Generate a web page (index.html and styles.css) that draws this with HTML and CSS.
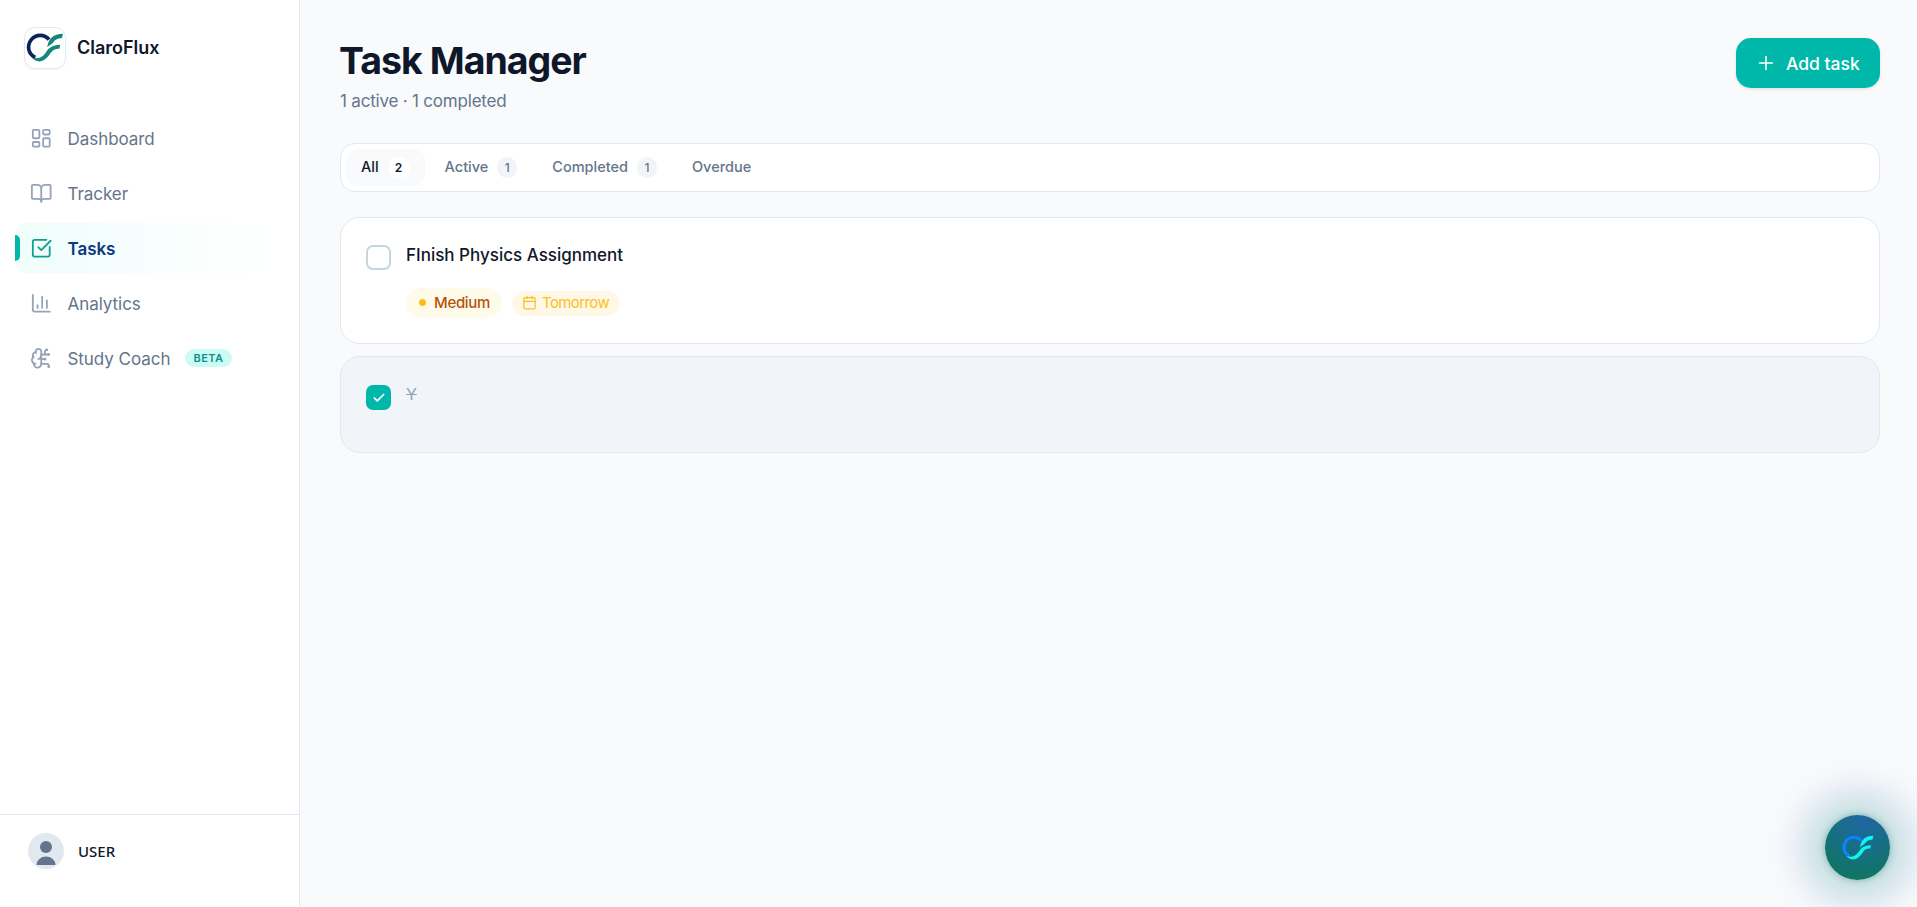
FILE: index.html
```html
<!DOCTYPE html>
<html lang="en">
  <head>
    <meta charset="UTF-8" />
    <title>ClaroFlux - Task Manager</title>
    <link rel="stylesheet" href="styles.css">
  </head>
  <body>
    <svg class="sprite">
      <symbol id="logo" viewBox="0 0 126 126">
        <path class="logo-c" d="M75 38 C62 21 36 21 22 38 C8 56 12 82 34 91" />
        <path class="logo-f" d="M70 61 C73 34 88 21 117 20 L114 33 C99 34 93 39 87 47 C82 52 77 53 70 61Z" />
        <path class="logo-f" d="M22 91 C37 97 52 94 63 80 C74 62 83 54 109 53 L106 65 C93 65 87 68 79 79 C66 100 44 115 22 91Z" />
      </symbol>
    </svg>
    <div class="layout">
      <aside class="sidebar">
        <div class="brand">
          <div class="brand-logo"><svg><use href="#logo" /></svg></div>
          <span class="brand-name">ClaroFlux</span>
        </div>
        <nav class="nav">
          <a class="nav-item">
            <svg class="icon" viewBox="0 0 24 24">
              <rect x="3" y="3" width="7" height="9" rx="1" />
              <rect x="14" y="3" width="7" height="5" rx="1" />
              <rect x="14" y="12" width="7" height="9" rx="1" />
              <rect x="3" y="16" width="7" height="5" rx="1" />
            </svg>
            <span>Dashboard</span>
          </a>
          <a class="nav-item">
            <svg class="icon" viewBox="0 0 24 24">
              <path d="M12 7v14" />
              <path d="M3 18a1 1 0 0 1-1-1V4a1 1 0 0 1 1-1h5a4 4 0 0 1 4 4 4 4 0 0 1 4-4h5a1 1 0 0 1 1 1v13a1 1 0 0 1-1 1h-6a3 3 0 0 0-3 3 3 3 0 0 0-3-3z" />
            </svg>
            <span>Tracker</span>
          </a>
          <a class="nav-item active">
            <svg class="icon" viewBox="0 0 24 24">
              <path d="M21 10.5V19a2 2 0 0 1-2 2H5a2 2 0 0 1-2-2V5a2 2 0 0 1 2-2h12.5" />
              <path d="m9 11 3 3L22 4" />
            </svg>
            <span>Tasks</span>
          </a>
          <a class="nav-item">
            <svg class="icon" viewBox="0 0 24 24">
              <path d="M3 3v16a2 2 0 0 0 2 2h16" />
              <path d="M18 17V9" />
              <path d="M13 17V5" />
              <path d="M8 17v-3" />
            </svg>
            <span>Analytics</span>
          </a>
          <a class="nav-item">
            <svg class="icon" viewBox="0 0 24 24">
              <path d="M12 5a3 3 0 1 0-5.997.125 4 4 0 0 0-2.526 5.77 4 4 0 0 0 .556 6.588A4 4 0 1 0 12 18Z" />
              <path d="M9 13a4.5 4.5 0 0 0 3-4" />
              <path d="M6.003 5.125A3 3 0 0 0 6.401 6.5" />
              <path d="M3.477 10.896a4 4 0 0 1 .585-.396" />
              <path d="M6 18a4 4 0 0 1-1.967-.516" />
              <path d="M12 13h4" />
              <path d="M12 18h6a2 2 0 0 1 2 2v1" />
              <path d="M12 8h8" />
              <path d="M16 8V5a2 2 0 0 1 2-2" />
              <circle cx="16" cy="13" r=".5" />
              <circle cx="18" cy="3" r=".5" />
              <circle cx="20" cy="21" r=".5" />
              <circle cx="20" cy="8" r=".5" />
            </svg>
            <span>Study Coach</span>
            <span class="beta">BETA</span>
          </a>
        </nav>
        <div class="profile">
          <svg class="avatar" viewBox="0 0 36 36">
            <circle cx="18" cy="18" r="18" fill="#e2e8f0" />
            <circle cx="18" cy="14" r="6" fill="#64748b" />
            <path d="M8.5 32a9.5 8.5 0 0 1 19 0z" fill="#64748b" />
          </svg>
          <span class="profile-name">USER</span>
        </div>
      </aside>

      <main class="main">
        <header class="header">
          <div>
            <h1>Task Manager</h1>
            <p class="summary">1 active · 1 completed</p>
          </div>
          <button class="add-button">
            <svg class="icon" viewBox="0 0 24 24"><path d="M5 12h14M12 5v14" /></svg>
            <span>Add task</span>
          </button>
        </header>

        <div class="tabs">
          <button class="tab selected">All <span class="count">2</span></button>
          <button class="tab">Active <span class="count">1</span></button>
          <button class="tab">Completed <span class="count">1</span></button>
          <button class="tab">Overdue</button>
        </div>

        <div class="task-list">
          <div class="task">
            <span class="checkbox"></span>
            <div class="task-body">
              <div class="task-title">FInish Physics Assignment</div>
              <div class="tags">
                <span class="tag priority"><i class="dot"></i>Medium</span>
                <span class="tag due">
                  <svg class="icon" viewBox="0 0 24 24">
                    <path d="M8 2v4M16 2v4M3 10h18" />
                    <rect x="3" y="4" width="18" height="18" rx="2" />
                  </svg>
                  Tomorrow
                </span>
              </div>
            </div>
          </div>
          <div class="task done">
            <span class="checkbox">
              <svg class="icon" viewBox="0 0 24 24"><path d="M20 6 9 17l-5-5" /></svg>
            </span>
            <div class="task-body">
              <div class="task-title">Y</div>
            </div>
          </div>
        </div>
      </main>
    </div>
    <button class="coach-button"><svg><use href="#logo" /></svg></button>
  </body>
</html>
```

FILE: styles.css
```css
* {
  box-sizing: border-box;
}
body {
  margin: 0;
  font-family: Inter, 'Liberation Sans', sans-serif;
  background: #f8fafc;
  color: #0f172a;
  overflow: hidden;
}
button {
  border: 0;
  font-family: inherit;
}
.sprite {
  display: none;
}
.icon {
  flex: none;
  fill: none;
  stroke: currentColor;
  stroke-width: 1.75;
  stroke-linecap: round;
  stroke-linejoin: round;
}
.layout {
  display: flex;
  height: 100vh;
}

/* sidebar */
.sidebar {
  display: flex;
  flex-direction: column;
  width: 300px;
  background: #fff;
  border-right: 1px solid #e2e8f0;
}
.brand {
  display: flex;
  align-items: center;
  gap: 11px;
  padding: 27px 24px 0;
}
.brand-logo {
  width: 42px;
  height: 42px;
  border: 1px solid #e2e8f0;
  border-radius: 11px;
  box-shadow: 0 1px 2px rgba(15, 23, 42, 0.05);
}
.brand-logo svg {
  display: block;
  width: 42px;
  height: 42px;
  margin: -1px;
}
.logo-c {
  fill: none;
  stroke: var(--logo-c, #0b2559);
  stroke-width: 11;
}
.logo-f {
  fill: var(--logo-f, #14867a);
}
.brand-name {
  padding-bottom: 1px;
  font-size: 18px;
  font-weight: 600;
  letter-spacing: 0;
}
.nav {
  display: flex;
  flex-direction: column;
  gap: 5px;
  flex: 1;
  padding: 44px 15px 0;
}
.nav-item {
  display: flex;
  align-items: center;
  height: 50px;
  padding-left: 15px;
  border-radius: 14px;
  font-size: 17px;
  line-height: 22px;
  letter-spacing: -0.05px;
  color: #64748b;
}
.nav-item span {
  margin-top: 1px;
}
.nav-item .icon {
  width: 22.5px;
  height: 22.5px;
  margin-right: 15px;
  color: #94a3b8;
  stroke-width: 1.9;
}
.nav-item.active {
  position: relative;
  background: linear-gradient(to right, #effdfb, #fff);
  color: #0a3a82;
  font-weight: 600;
}
.nav-item.active .icon {
  color: #0d9f90;
}
.nav-item.active::before {
  content: '';
  position: absolute;
  left: 0;
  top: 12px;
  width: 5px;
  height: 26px;
  border-radius: 0 5px 5px 0;
  background: #00b8a9;
}
.nav-item .beta {
  margin: 0 0 0 15px;
  padding: 0 8px;
  border-radius: 9px;
  background: #ccfbf6;
  color: #0d9488;
  font-size: 11px;
  line-height: 18px;
  font-weight: 600;
  letter-spacing: 0.5px;
}
.profile {
  display: flex;
  align-items: flex-start;
  gap: 14px;
  height: 93px;
  padding: 18px 28px;
  border-top: 1px solid #e2e8f0;
}
.avatar {
  width: 36px;
  height: 36px;
}
.profile-name {
  font-family: 'Noto Sans', sans-serif;
  font-size: 15px;
  line-height: 37px;
  font-weight: 500;
}

/* content */
.main {
  flex: 1;
  padding: 38px 37px 0 40px;
}
.header {
  display: flex;
  justify-content: space-between;
  align-items: flex-start;
  height: 105px;
}
h1 {
  margin: 0 0 0 -1px;
  font-size: 37.5px;
  line-height: 46px;
  font-weight: 700;
  letter-spacing: -1px;
}
.summary {
  margin: 5px 0 0;
  font-size: 17px;
  line-height: 24px;
  letter-spacing: -0.2px;
  color: #64748b;
}
.add-button {
  display: flex;
  align-items: center;
  gap: 9px;
  width: 144px;
  height: 50px;
  padding: 0 19px;
  border-radius: 15px;
  background: #00b8a9;
  box-shadow: 0 1px 3px rgba(15, 23, 42, 0.12);
  color: #fff;
  font-size: 17.5px;
  font-weight: 500;
  white-space: nowrap;
}
.add-button .icon {
  width: 22px;
  height: 22px;
}
.tabs {
  display: flex;
  gap: 5px;
  height: 49px;
  padding: 5px;
  border: 1px solid #e2e8f0;
  border-radius: 15px;
  background: #fff;
}
.tab {
  display: flex;
  align-items: center;
  gap: 9px;
  padding: 0 15px 2px;
  border-radius: 12px;
  background: none;
  color: #64748b;
  font-size: 14.5px;
  font-weight: 500;
}
.tab.selected {
  background: #f8fafc;
  color: #0f172a;
}
.count {
  width: 20px;
  margin-top: 1px;
  border-radius: 11px;
  background: #f1f5f9;
  font-size: 12px;
  line-height: 21px;
  text-align: center;
}
.selected .count {
  width: 22px;
  background: #fff;
  font-weight: 600;
}
.task-list {
  display: flex;
  flex-direction: column;
  gap: 12px;
  margin-top: 25px;
}
.task {
  display: flex;
  gap: 15px;
  height: 127px;
  padding: 24px 25px;
  border: 1px solid #e2e8f0;
  border-radius: 20px;
  background: #fff;
}
.checkbox {
  display: flex;
  align-items: center;
  justify-content: center;
  width: 25px;
  height: 25px;
  margin-top: 3px;
  border: 2px solid #c5d7de;
  border-radius: 7px;
}
.task-title {
  font-size: 17px;
  line-height: 26px;
  font-weight: 500;
}
.tags {
  display: flex;
  align-items: center;
  gap: 10px;
  margin-top: 20px;
}
.tag {
  display: flex;
  align-items: center;
  padding-bottom: 1px;
  border-radius: 15px;
  font-size: 15px;
  white-space: nowrap;
}
.priority {
  width: 96px;
  height: 30px;
  padding-left: 13px;
  background: #fffbeb;
  color: #b45309;
  font-weight: 500;
  letter-spacing: -0.3px;
}
.dot {
  width: 7px;
  height: 7px;
  margin-right: 8px;
  border-radius: 50%;
  background: #fbbf14;
}
.due {
  gap: 5px;
  width: 108px;
  height: 25px;
  padding-left: 10px;
  background: #fff8e6;
  color: #fbbf24;
  letter-spacing: -0.6px;
}
.due .icon {
  width: 15px;
  height: 15px;
  stroke-width: 2;
}
.task.done {
  height: 97px;
  background: #f1f4f9;
}
.done .checkbox {
  margin-top: 4px;
  border: 0;
  background: #00b8a9;
  color: #fff;
}
.done .checkbox .icon {
  width: 14px;
  height: 14px;
  stroke-width: 3;
}
.done .task-title {
  color: #94a3b8;
  font-size: 16px;
  font-weight: 400;
  text-decoration: line-through;
}

/* floating study coach button */
.coach-button {
  --logo-c: #0a84ff;
  --logo-f: #11f5ee;
  position: fixed;
  right: 27px;
  bottom: 27px;
  display: flex;
  align-items: center;
  justify-content: center;
  width: 65px;
  height: 65px;
  padding: 0;
  border-radius: 50%;
  background: radial-gradient(circle at 60% 10%, #1f66a3 0%, #176e85 40%, #0f7560 85%);
  box-shadow: 0 0 6px rgba(15, 100, 85, 0.4), 0 0 34px 14px rgba(16, 170, 125, 0.2),
    0 0 32px 32px rgba(90, 100, 190, 0.1);
}
.coach-button svg {
  width: 36px;
  height: 36px;
}
```
